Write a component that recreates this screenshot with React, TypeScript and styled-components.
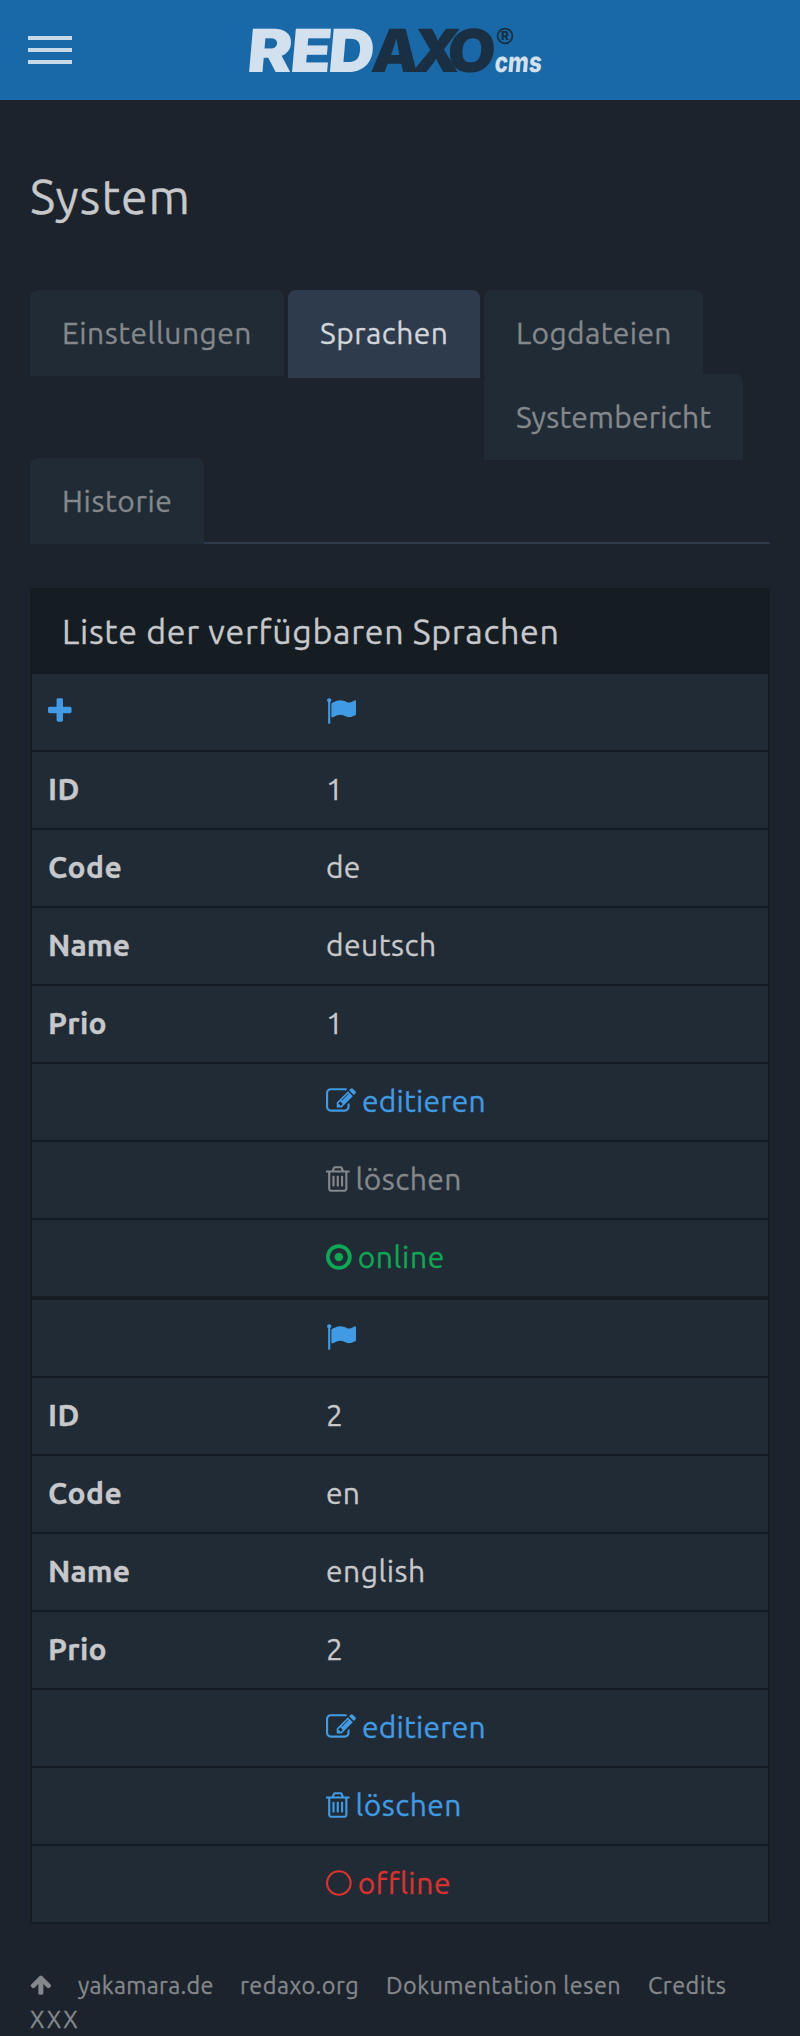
import React from "react";
import styled, { createGlobalStyle } from "styled-components";

const color = {
  page: "#1c232c",
  brand: "#1968a8",
  surface: "#212b35",
  heading: "#151c22",
  line: "#151c22",
  active: "#2e3b4c",
  text: "#c6c8cb",
  muted: "#84888c",
  link: "#409be4",
  online: "#0ca855",
  offline: "#dc322f",
};

const GlobalStyle = createGlobalStyle`
  * { box-sizing: border-box; }
  html { background: ${color.page}; }
  body {
    margin: 0;
    background: ${color.page};
    color: ${color.text};
    font-family: Ubuntu, "Noto Sans", sans-serif;
    font-size: 30px;
    line-height: 44px;
    -webkit-text-stroke: 0.3px currentColor;
  }
`;

const Page = styled.div`
  width: 800px;
  height: 2036px;
  overflow: hidden;
`;

const TopBar = styled.header`
  display: grid;
  grid-template-columns: 72px 1fr;
  align-items: center;
  column-gap: 168px;
  height: 100px;
  background: ${color.brand};
`;

const MenuButton = styled.button`
  display: flex;
  flex-direction: column;
  gap: 8px;
  padding: 0 0 0 28px;
  border: 0;
  background: none;
`;

const MenuLine = styled.span`
  width: 44px;
  height: 4px;
  background: #c5d9e8;
`;

const LogoSvg = styled.svg`
  display: block;
  font-family: Inter, sans-serif;
  font-weight: 900;
  -webkit-text-stroke: 0;
`;

const Main = styled.main`
  padding: 0 30px;
`;

const Title = styled.h1`
  margin: 0;
  padding-top: 69px;
  height: 190px;
  font-size: 48px;
  font-weight: 400;
  line-height: 54px;
  letter-spacing: 0.02em;
`;

const Tabs = styled.nav`
  height: 254px;
  border-bottom: 2px solid ${color.active};
`;

const TabRow = styled.div`
  display: flex;
  align-items: flex-start;
  gap: 4px;
  height: 168px;
`;

const TabStack = styled.div`
  display: flex;
  flex-direction: column;
  align-items: flex-start;
`;

const Tab = styled.a<{ $active?: boolean; $width: number; $track: number }>`
  display: block;
  flex: none;
  width: ${(p) => p.$width}px;
  height: ${(p) => (p.$active ? 88 : 86)}px;
  margin-bottom: -2px;
  padding: 21px 0 0 32px;
  border-radius: 8px 8px 0 0;
  background: ${(p) => (p.$active ? color.active : color.surface)};
  color: ${(p) => (p.$active ? "#d2d5d9" : color.muted)};
  letter-spacing: ${(p) => p.$track}px;
  white-space: nowrap;
`;

const Panel = styled.section`
  margin-top: 44px;
  border: 2px solid ${color.line};
  border-top: 0;
  background: ${color.surface};
`;

const PanelHeading = styled.h2`
  margin: 0;
  height: 86px;
  padding: 21px 30px 0;
  background: ${color.heading};
  font-size: 34px;
  font-weight: 400;
  letter-spacing: 0.02em;
  white-space: nowrap;
`;

const Row = styled.div`
  display: grid;
  grid-template-columns: 278px 1fr;
  align-items: center;
  height: 78px;
  padding: 0 16px 2px;
  border-bottom: 2px solid ${color.line};
`;

const Group = styled.div`
  & + & {
    border-top: 2px solid ${color.line};
  }
  &:last-child > ${Row}:last-child {
    height: 76px;
    border-bottom: 0;
  }
`;

const Label = styled.span<{ $track?: number }>`
  font-weight: 700;
  letter-spacing: ${(p) => p.$track ?? 0.5}px;
`;

const Value = styled.span<{ $tone?: string; $track?: number }>`
  display: flex;
  align-items: center;
  gap: 6px;
  color: ${(p) => p.$tone ?? color.text};
  letter-spacing: ${(p) => p.$track ?? 0.6}px;
`;

const Glyph = styled.svg`
  display: block;
  flex: none;
  fill: currentColor;
`;

const AddLink = styled.a`
  color: ${color.link};
`;

const Footer = styled.footer`
  display: flex;
  flex-wrap: wrap;
  align-items: center;
  margin-top: 44px;
  color: ${color.muted};
  font-size: 23.4px;
  line-height: 34px;
`;

const FootItem = styled.a<{ $width?: number; $track?: number }>`
  width: ${(p) => (p.$width ? `${p.$width}px` : "auto")};
  letter-spacing: ${(p) => p.$track ?? 0.5}px;
  white-space: nowrap;
`;

type IconName = "plus" | "flag" | "edit" | "trash" | "online" | "offline" | "up";

/* Each glyph: left edge and advance on a 1792-unit grid, plus its outline. */
const icons: Record<IconName, { left: number; advance: number; d: string }> = {
  plus: {
    left: 192,
    advance: 1408,
    d: "M1600 736v192q0 40-28 68t-68 28h-416v416q0 40-28 68t-68 28h-192q-40 0-68-28t-28-68v-416h-416q-40 0-68-28t-28-68v-192q0-40 28-68t68-28h416v-416q0-40 28-68t68-28h192q40 0 68 28t28 68v416h416q40 0 68 28t28 68z",
  },
  flag: {
    left: 0,
    advance: 1792,
    d: "M320 256q0 72-64 110v1266q0 13-9.500 22.500t-22.500 9.500h-64q-13 0-22.500-9.500t-9.500-22.500v-1266q-64-38-64-110 0-53 37.500-90.500t90.500-37.500 90.500 37.500 37.500 90.500zm1472 64v763q0 25-12.500 38.500t-39.500 27.500q-215 116-369 116-61 0-123.500-22t-108.500-48-115.500-48-142.500-22q-192 0-464 146-17 9-33 9-26 0-45-19t-19-45v-742q0-32 31-55 21-14 79-43 236-120 421-120 107 0 200 29t219 88q38 19 88 19 54 0 117.500-21t110-47 88-47 54.500-21q26 0 45 19t19 45z",
  },
  edit: {
    left: 0,
    advance: 1792,
    d: "M888 1184l116-116-152-152-116 116v56h96v96h56zm440-720q-16-16-33 1l-350 350q-17 17-1 33t33-1l350-350q17-17 1-33zm80 594v190q0 119-84.500 203.500t-203.500 84.500h-832q-119 0-203.500-84.500t-84.500-203.500v-832q0-119 84.500-203.500t203.500-84.500h832q63 0 117 25 15 7 18 23 3 17-9 29l-49 49q-14 14-32 8-23-6-45-6h-832q-66 0-113 47t-47 113v832q0 66 47 113t113 47h832q66 0 113-47t47-113v-126q0-13 9-22l64-64q15-15 35-7t20 29zm-96-738l288 288-672 672h-288v-288zm444 132l-92 92-288-288 92-92q28-28 68-28t68 28l152 152q28 28 28 68t-28 68z",
  },
  trash: {
    left: 192,
    advance: 1408,
    d: "M704 736v576q0 14-9 23t-23 9h-64q-14 0-23-9t-9-23v-576q0-14 9-23t23-9h64q14 0 23 9t9 23zm256 0v576q0 14-9 23t-23 9h-64q-14 0-23-9t-9-23v-576q0-14 9-23t23-9h64q14 0 23 9t9 23zm256 0v576q0 14-9 23t-23 9h-64q-14 0-23-9t-9-23v-576q0-14 9-23t23-9h64q14 0 23 9t9 23zm128 724v-948h-896v948q0 22 7 40.500t14.500 27 10.500 8.500h832q3 0 10.500-8.500t14.500-27 7-40.500zm-672-1076h448l-48-117q-7-9-17-11h-317q-10 2-17 11zm928 32v64q0 14-9 23t-23 9h-96v948q0 83-47 143.500t-113 60.500h-832q-66 0-113-58.500t-47-141.500v-952h-96q-14 0-23-9t-9-23v-64q0-14 9-23t23-9h309l70-167q15-37 54-63t79-26h320q40 0 79 26t54 63l70 167h309q14 0 23 9t9 23z",
  },
  online: {
    left: 128,
    advance: 1536,
    d: "M896 640a256 256 0 1 1 0 512a256 256 0 1 1 0-512zM896 352a544 544 0 1 0 0 1088a544 544 0 1 0 0-1088zM896 128a768 768 0 1 1 0 1536a768 768 0 1 1 0-1536z",
  },
  offline: {
    left: 128,
    advance: 1536,
    d: "M896 256a640 640 0 1 0 0 1280a640 640 0 1 0 0-1280zM896 128a768 768 0 1 1 0 1536a768 768 0 1 1 0-1536z",
  },
  up: {
    left: 64,
    advance: 1664,
    d: "M1675 971q0 51-37 90l-75 75q-38 38-91 38-54 0-90-38l-294-293v704q0 52-37.500 84.500t-90.500 32.500h-128q-53 0-90.500-32.500t-37.500-84.500v-704l-294 293q-36 38-90 38t-90-38l-75-75q-38-38-38-90 0-53 38-91l651-651q35-37 90-37 54 0 91 37l651 651q37 39 37 91z",
  },
};

function Icon({ name, size = 30 }: { name: IconName; size?: number }) {
  const { left, advance, d } = icons[name];
  return (
    <Glyph
      width={(advance / 1792) * size}
      height={size}
      viewBox={`${left} 0 ${advance} 1792`}
      fillRule={name === "online" || name === "offline" ? "evenodd" : "nonzero"}
      aria-hidden
    >
      <path d={d} />
    </Glyph>
  );
}

const letters = [
  { ch: "R", x: 6, w: 45, fill: "#d2e1ed" },
  { ch: "E", x: 49, w: 41, fill: "#d2e1ed" },
  { ch: "D", x: 87, w: 46, fill: "#d2e1ed" },
  { ch: "A", x: 130, w: 48, fill: "#1a2f42" },
  { ch: "X", x: 171, w: 48, fill: "#1a2f42" },
  { ch: "O", x: 206, w: 48, fill: "#1a2f42" },
];

function Logo() {
  return (
    <LogoSvg width="320" height="100" viewBox="0 0 320 100" role="img" aria-label="REDAXO cms">
      <g fontSize="59.5">
        {letters.map((l) => (
          <text
            key={l.ch}
            fill={l.fill}
            textLength={l.w}
            lengthAdjust="spacingAndGlyphs"
            transform={`translate(${l.x} 71.500) skewX(-5)`}
          >
            {l.ch}
          </text>
        ))}
      </g>
      <circle cx="265" cy="36" r="7.400" fill="none" stroke="#1a2f42" strokeWidth="1.800" />
      <text x="261" y="40.300" fontSize="12" fontWeight="800" fill="#1a2f42">R</text>
      <text
        fontSize="28"
        fontWeight="800"
        fill="#d2e1ed"
        textLength="47"
        lengthAdjust="spacingAndGlyphs"
        transform="translate(254 71.500) skewX(-5)"
      >
        cms
      </text>
    </LogoSvg>
  );
}

type Language = { id: number; code: string; name: string; prio: number; online: boolean; deletable: boolean };

const languages: Language[] = [
  { id: 1, code: "de", name: "deutsch", prio: 1, online: true, deletable: false },
  { id: 2, code: "en", name: "english", prio: 2, online: false, deletable: true },
];

function LanguageGroup({ lang, first }: { lang: Language; first: boolean }) {
  return (
    <Group>
      <Row>
        <AddLink>{first && <Icon name="plus" />}</AddLink>
        <Value $tone={color.link}><Icon name="flag" /></Value>
      </Row>
      <Row><Label>ID</Label><Value>{lang.id}</Value></Row>
      <Row><Label>Code</Label><Value $track={0.1}>{lang.code}</Value></Row>
      <Row><Label $track={0.1}>Name</Label><Value $track={0.5}>{lang.name}</Value></Row>
      <Row><Label $track={0.3}>Prio</Label><Value>{lang.prio}</Value></Row>
      <Row><Label /><Value $tone={color.link} $track={0.2}><Icon name="edit" />editieren</Value></Row>
      <Row>
        <Label />
        <Value $tone={lang.deletable ? color.link : color.muted} $track={0.45}>
          <Icon name="trash" />
          löschen
        </Value>
      </Row>
      <Row>
        <Label />
        <Value $tone={lang.online ? color.online : color.offline}>
          <Icon name={lang.online ? "online" : "offline"} />
          {lang.online ? "online" : "offline"}
        </Value>
      </Row>
    </Group>
  );
}

export default function App() {
  return (
    <Page>
      <GlobalStyle />
      <TopBar>
        <MenuButton aria-label="Menü"><MenuLine /><MenuLine /><MenuLine /></MenuButton>
        <Logo />
      </TopBar>
      <Main>
        <Title>System</Title>
        <Tabs>
          <TabRow>
            <Tab $width={254} $track={0.5}>Einstellungen</Tab>
            <Tab $width={192} $track={0.45} $active>Sprachen</Tab>
            <TabStack>
              <Tab $width={219} $track={0.35}>Logdateien</Tab>
              <Tab $width={259} $track={0.2}>Systembericht</Tab>
            </TabStack>
          </TabRow>
          <Tab $width={174} $track={0.6}>Historie</Tab>
        </Tabs>
        <Panel>
          <PanelHeading>Liste der verfügbaren Sprachen</PanelHeading>
          {languages.map((lang, i) => (
            <LanguageGroup key={lang.id} lang={lang} first={i === 0} />
          ))}
        </Panel>
        <Footer>
          <FootItem $width={48}><Icon name="up" size={23.4} /></FootItem>
          <FootItem $width={162} $track={0.3}>yakamara.de</FootItem>
          <FootItem $width={146}>redaxo.org</FootItem>
          <FootItem $width={262}>Dokumentation lesen</FootItem>
          <FootItem $width={100}>Credits</FootItem>
          <FootItem $track={1.8}>XXX</FootItem>
        </Footer>
      </Main>
    </Page>
  );
}
